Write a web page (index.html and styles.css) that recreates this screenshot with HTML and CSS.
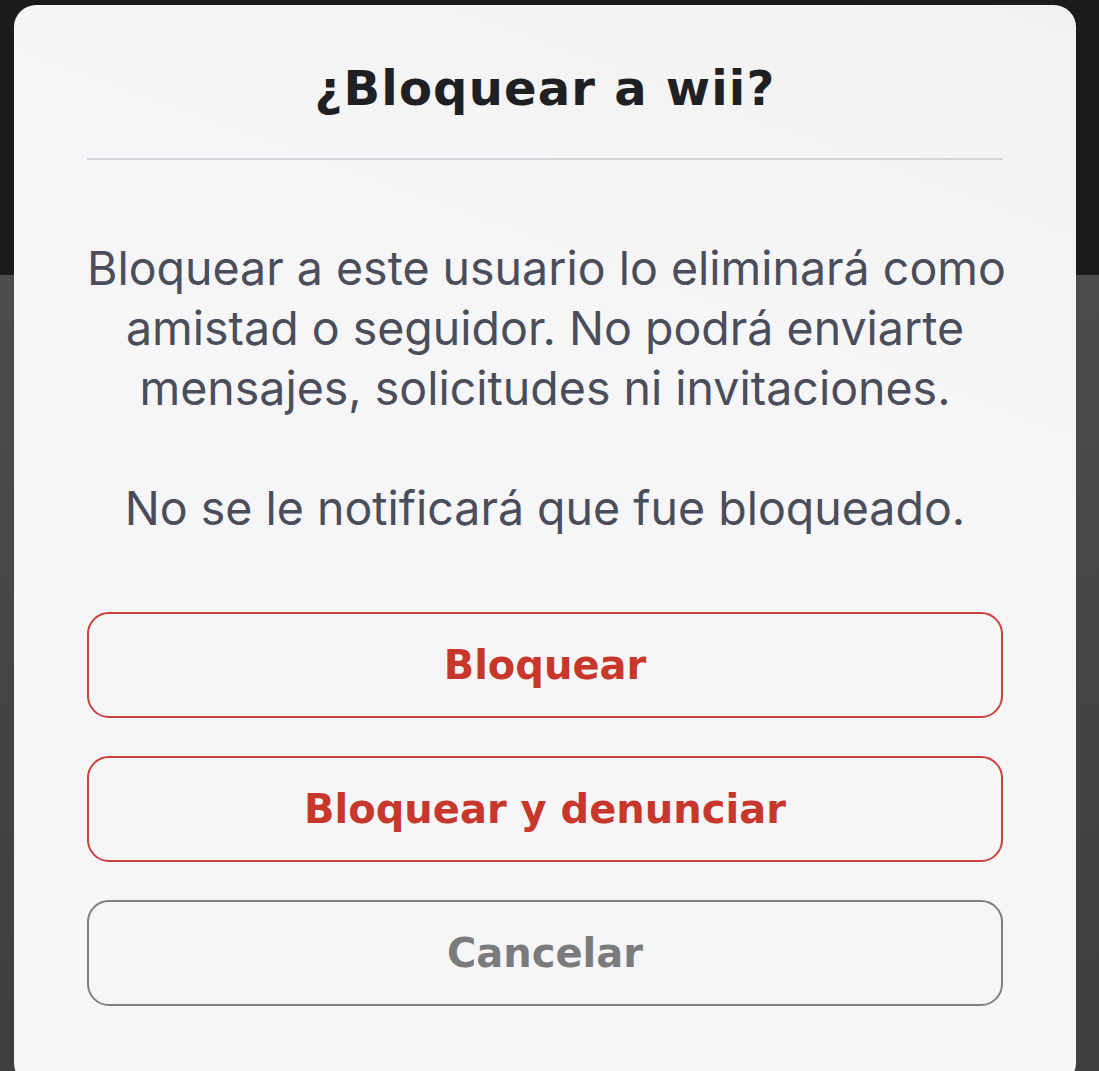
FILE: index.html
```html
<!DOCTYPE html>
<html lang="es">
<head>
<meta charset="utf-8">
<title>¿Bloquear a wii?</title>
<link rel="stylesheet" href="styles.css">
</head>
<body>
<div class="backdrop">
  <div class="modal">
    <h1 class="title">¿Bloquear a wii?</h1>
    <div class="divider"></div>
    <div class="body">
      <p>Bloquear a este usuario lo eliminará como<br>amistad o seguidor. No podrá enviarte<br>mensajes, solicitudes ni invitaciones.</p>
      <p>No se le notificará que fue bloqueado.</p>
    </div>
    <div class="actions">
      <button class="btn btn-danger">Bloquear</button>
      <button class="btn btn-danger">Bloquear y denunciar</button>
      <button class="btn btn-cancel">Cancelar</button>
    </div>
  </div>
</div>
</body>
</html>
```
FILE: styles.css
```css
html, body {
  margin: 0;
  padding: 0;
  height: 1071px;
  overflow: hidden;
}
body {
  background: linear-gradient(180deg, #1b1b1c 0, #1b1b1c 275px, #4c4c4c 275px, #3d3e40 1071px);
  font-family: "Inter", "Noto Sans", sans-serif;
}
.backdrop {
  padding: 5px 23px 0 14px;
}
.modal {
  width: 1062px;
  height: 1080px;
  box-sizing: border-box;
  padding: 53px 73px 0;
  border-radius: 22px;
  background: linear-gradient(200deg, #f1f1f1 0, #f6f6f8 30%, #f6f6f8 100%);
}
.title {
  margin: 0;
  height: 60px;
  line-height: 60px;
  text-align: center;
  font-family: "DejaVu Sans", "Inter", sans-serif;
  font-size: 48px;
  font-weight: 700;
  letter-spacing: 1.2px;
  color: #1f2024;
}
.divider {
  margin-top: 40px;
  height: 2px;
  background: #d4d4da;
}
.body {
  margin-top: 78px;
  color: #4b4d5a;
  font-size: 46.5px;
  line-height: 60px;
  text-align: center;
  white-space: nowrap;
}
.body p {
  margin: 0 0 60px;
}
.body p:last-child {
  margin-bottom: 0;
}
.actions {
  margin-top: 74px;
  display: flex;
  flex-direction: column;
  gap: 38px;
}
.btn {
  height: 106px;
  border-radius: 22px;
  background: transparent;
  font-family: "DejaVu Sans", "Inter", sans-serif;
  font-size: 40px;
  font-weight: 700;
  padding: 0;
}
.btn-danger {
  border: 2px solid #c8433a;
  color: #c8372c;
}
.btn-cancel {
  border: 2px solid #7f7f81;
  color: #7b7b7d;
}
```
